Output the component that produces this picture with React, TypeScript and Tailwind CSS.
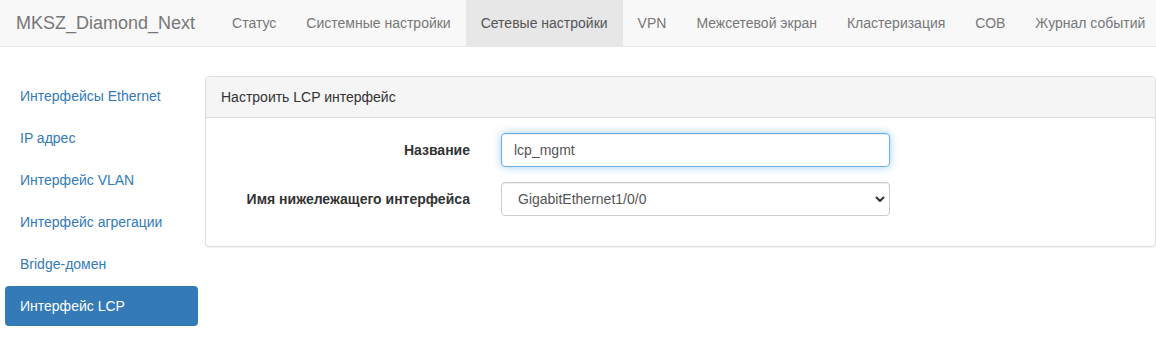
import React from "react";

const navItems = [
  "Статус",
  "Системные настройки",
  "Сетевые настройки",
  "VPN",
  "Межсетевой экран",
  "Кластеризация",
  "СОВ",
  "Журнал событий",
];

const sideItems = [
  "Интерфейсы Ethernet",
  "IP адрес",
  "Интерфейс VLAN",
  "Интерфейс агрегации",
  "Bridge-домен",
  "Интерфейс LCP",
];

export default function App() {
  return (
    <div
      className="w-[1156px] h-[347px] overflow-hidden bg-white text-[14px] leading-[20px] text-[#333]"
      style={{ fontFamily: '"Liberation Sans", Arial, sans-serif' }}
    >
      {/* Navbar */}
      <div className="flex h-[47px] bg-[#f8f8f8] border-b border-[#e7e7e7] pl-[16px] whitespace-nowrap">
        <div className="h-[46px] flex items-center pr-[22px] text-[18px] text-[#777]">
          MKSZ_Diamond_Next
        </div>
        <div className="flex">
          {navItems.map((it, i) => (
            <div
              key={it}
              className={
                i === 2
                  ? "h-[46px] flex items-center px-[15px] bg-[#e7e7e7] text-[#555]"
                  : "h-[46px] flex items-center px-[15px] text-[#777]"
              }
            >
              {it}
            </div>
          ))}
        </div>
      </div>

      {/* Content */}
      <div className="flex mt-[29px] pl-[5px] gap-[7px]">
        <div className="w-[193px] flex flex-col gap-[2px] shrink-0">
          {sideItems.map((it, i) => (
            <div
              key={it}
              className={
                i === sideItems.length - 1
                  ? "h-[40px] flex items-center px-[15px] rounded-[4px] bg-[#337ab7] text-white"
                  : "h-[40px] flex items-center px-[15px] rounded-[4px] text-[#337ab7]"
              }
            >
              {it}
            </div>
          ))}
        </div>

        <div className="w-[951px] shrink-0 self-start border border-[#ddd] rounded-[4px] shadow-[0_1px_1px_rgba(0,0,0,0.05)] bg-white">
          <div className="h-[41px] flex items-center px-[15px] bg-[#f5f5f5] border-b border-[#ddd] rounded-t-[3px] text-[#333]">
            Настроить LCP интерфейс
          </div>
          <div className="pt-[15px] pb-[30px] pl-[15px] flex flex-col gap-[15px]">
            <div className="flex items-center">
              <div className="w-[249px] text-right font-bold text-[#333]">Название</div>
              <div className="ml-[31px] w-[389px] h-[34px] flex items-center px-[12px] border border-[#66afe9] rounded-[4px] shadow-[inset_0_1px_1px_rgba(0,0,0,0.075),0_0_8px_rgba(102,175,233,0.6)] text-[#555]">
                lcp_mgmt
              </div>
            </div>
            <div className="flex items-center">
              <div className="w-[249px] text-right font-bold text-[#333]">
                Имя нижележащего интерфейса
              </div>
              <div className="ml-[31px] w-[389px] h-[34px] flex items-center justify-between pl-[16px] pr-[3px] border border-[#ccc] rounded-[4px] shadow-[inset_0_1px_1px_rgba(0,0,0,0.075)] text-[#555]">
                <span>GigabitEthernet1/0/0</span>
                <svg width="12" height="12" viewBox="0 0 12 12">
                  <path
                    d="M2.5 4.5 L6 8 L9.5 4.5"
                    fill="none"
                    stroke="#333"
                    strokeWidth="2"
                    strokeLinecap="round"
                    strokeLinejoin="round"
                  />
                </svg>
              </div>
            </div>
          </div>
        </div>
      </div>
    </div>
  );
}
